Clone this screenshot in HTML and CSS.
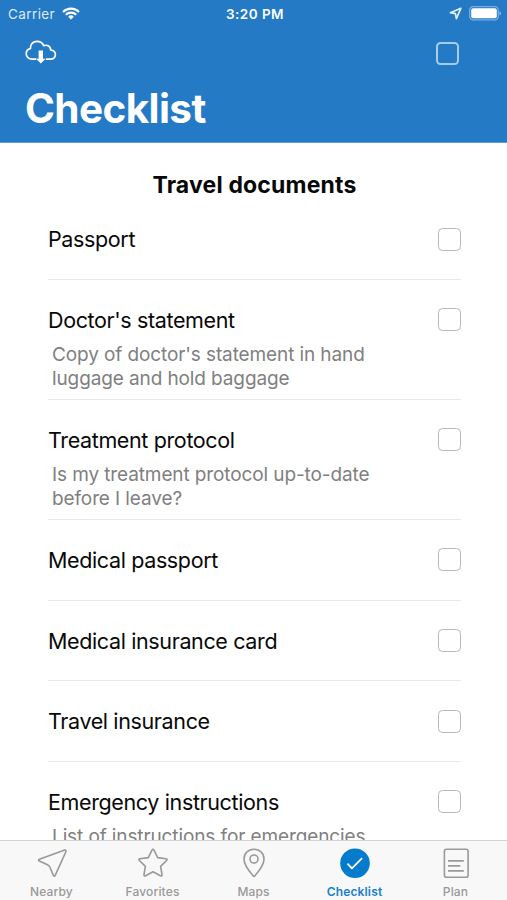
FILE: index.html
```html
<!DOCTYPE html>
<html lang="en">
<head>
<meta charset="utf-8">
<title>Checklist</title>
<link rel="stylesheet" href="styles.css">
</head>
<body>
<div class="app">
  <header class="header">
    <div class="status">
      <div class="status-left">
        <span class="carrier">Carrier</span>
        <svg class="wifi" width="18" height="13" viewBox="0 0 18 13" fill="none" stroke="#fff" stroke-width="2.1"><path d="M1 4.9a11.4 11.4 0 0 1 16 0M3.8 7.8a7.4 7.4 0 0 1 10.4 0"/><path d="M9 12.4 6.1 9.7a4.2 4.2 0 0 1 5.8 0z" fill="#fff" stroke="none"/></svg>
      </div>
      <span class="time">3:20 PM</span>
      <div class="status-right">
        <svg width="13" height="13" viewBox="0 0 13 13" fill="none" stroke="#e4f0fc" stroke-width="1.7" stroke-linejoin="round"><path d="M11.8 1.3 1.4 5.7 6.4 6.7 7.4 11.6z"/></svg>
        <svg width="33" height="15" viewBox="0 0 33 15"><rect x=".7" y=".7" width="28.6" height="13.1" rx="3.6" fill="none" stroke="#78addf" stroke-width="1.3"/><rect x="2.2" y="2.3" width="25.6" height="9.9" rx="2" fill="#fff"/><path d="M30.5 5.2q1.5.7 1.5 2.1t-1.5 2.1z" fill="#8dbbe7"/></svg>
      </div>
    </div>
    <div class="toolbar">
      <svg class="cloud" width="32" height="24" viewBox="0 0 32 24" fill="none" stroke="#fff" stroke-width="1.7" stroke-linecap="round" stroke-linejoin="round"><path d="M10.6 19.100H7.300C3.800 19.100 1.200 16.900 1.200 13.800c0-2.700 1.800-4.700 4.200-5.200C5.100 4.300 8 1.300 12 1.300c3.200 0 5.700 1.700 6.800 4.300 3.700-1.200 6.800 1 6.900 4.400 2.900.3 4.700 2.100 4.700 4.600 0 2.600-2 4.500-4.900 4.500h-3.900"/><path d="M13.600 10.500h4.400v8.200h2.600l-4.800 4.700-4.800-4.700h2.600z" fill="#fff" stroke="none"/></svg>
      <span class="box box-light"></span>
    </div>
    <h1 class="title">Checklist</h1>
  </header>

  <main class="content">
    <h2 class="section">Travel documents</h2>
    <ul class="list">
      <li class="row"><div class="line"><span>Passport</span><span class="box"></span></div></li>
      <li class="row tall"><div class="line"><span>Doctor's statement</span><span class="box"></span></div>
        <p class="note">Copy of doctor's statement in hand<br>luggage and hold baggage</p></li>
      <li class="row tall"><div class="line"><span>Treatment protocol</span><span class="box"></span></div>
        <p class="note">Is my treatment protocol up-to-date<br>before I leave?</p></li>
      <li class="row"><div class="line"><span>Medical passport</span><span class="box"></span></div></li>
      <li class="row"><div class="line"><span>Medical insurance card</span><span class="box"></span></div></li>
      <li class="row"><div class="line"><span>Travel insurance</span><span class="box"></span></div></li>
      <li class="row tall"><div class="line"><span>Emergency instructions</span><span class="box"></span></div>
        <p class="note">List of instructions for emergencies</p></li>
    </ul>
  </main>

  <nav class="tabs">
    <a class="tab"><svg width="32" height="32" viewBox="0 0 32 32"><path d="M28.700 3.100 3.400 12.200q-1.700.9 0 1.900L11.500 17.700q1.600.8 2.300 2.300l3.700 8.600q1 1.500 1.700-.2L30 4.500q.2-1.700-1.300-1.400z"/></svg><span>Nearby</span></a>
    <a class="tab"><svg width="32" height="32" viewBox="0 0 32 32"><path d="M15 3.100q1-1.700 2 0l3.700 7.500 8.300 1.100q2 .4.600 1.800l-6 5.800 1.400 8.200q.2 2-1.600 1.200L16 24.800l-7.400 3.900q-1.800.8-1.600-1.200l1.400-8.200-6-5.800q-1.400-1.400.6-1.800l8.300-1.100z"/></svg><span>Favorites</span></a>
    <a class="tab"><svg width="32" height="32" viewBox="0 0 32 32"><path d="M16 2.200c-5.800 0-10 4.200-10 9.900 0 6.700 6 13.200 9.200 16.800q.8.8 1.600 0C20 25.300 26 18.800 26 12.100 26 6.400 21.800 2.200 16 2.200z"/><circle cx="16" cy="12" r="4"/></svg><span>Maps</span></a>
    <a class="tab active"><svg width="32" height="32" viewBox="0 0 32 32"><circle class="disc" cx="16" cy="16.300" r="14.800"/><path class="tick" d="m8.500 16.700 4.400 4.700 10.200-10.200"/></svg><span>Checklist</span></a>
    <a class="tab"><svg width="32" height="32" viewBox="0 0 32 32"><rect x="4.400" y="2.300" width="23.700" height="28" rx="2"/><path d="M8 13.900h15.800M8 18.900h12.300M8 23.900h15.800"/></svg><span>Plan</span></a>
  </nav>
</div>
</body>
</html>
```

FILE: styles.css
```css
* { box-sizing: border-box; }

body {
  margin: 0;
  font-family: Inter, "Liberation Sans", sans-serif;
  color: #080808;
  background: #fff;
}

.app {
  display: flex;
  flex-direction: column;
  width: 507px;
  height: 900px;
  overflow: hidden;
}

.header {
  flex: none;
  height: 143px;
  background: #257ac6;
  border-bottom: 1px solid #5f9fd8;
  color: #fff;
}

.status {
  display: grid;
  grid-template-columns: 1fr auto 1fr;
  align-items: center;
  height: 27px;
  padding: 0 5px 0 8px;
  font-size: 13.5px;
}

.status-left,
.status-right { display: flex; align-items: center; gap: 7px; }

.status-right { justify-content: flex-end; }

.carrier { color: #dcebfa; letter-spacing: 0.4px; }

.time { font-weight: 600; letter-spacing: 0.45px; }

.toolbar {
  display: flex;
  justify-content: space-between;
  align-items: center;
  height: 53px;
  padding: 0 48px 0 25px;
}

.cloud { margin-bottom: 4px; }

.box {
  flex: none;
  width: 23px;
  height: 23px;
  border: 1.5px solid #b8b8b8;
  border-radius: 4.5px;
}

.box-light {
  border: 2px solid #a6cdf1;
}

.title {
  margin: 4px 0 0 25px;
  font-size: 40.5px;
  line-height: 50px;
  font-weight: 700;
  letter-spacing: -0.6px;
}

.content {
  flex: 1;
  min-height: 0;
  overflow: hidden;
  padding: 24px 46px 0 48px;
}

.section {
  margin: 0;
  height: 32px;
  font-size: 23px;
  line-height: 36px;
  font-weight: 700;
  text-align: center;
  letter-spacing: 0.17px;
}

.list { margin: 0; padding: 0; list-style: none; }

.row {
  height: 80.6px;
  border-bottom: 1px solid #e9e9e9;
}

.row.tall { height: 120.2px; }

.line {
  display: flex;
  justify-content: space-between;
  align-items: center;
  height: 80px;
  font-size: 21.5px;
  letter-spacing: -0.37px;
}

.note {
  margin: -16.4px 0 0 4px;
  color: #808080;
  font-size: 19px;
  line-height: 23.3px;
  letter-spacing: -0.11px;
}

.tabs {
  flex: none;
  display: grid;
  grid-template-columns: repeat(5, 101px);
  justify-content: center;
  height: 60px;
  border-top: 1px solid #d3d3d3;
  background: #f8f8f8;
}

.tab {
  display: flex;
  flex-direction: column;
  align-items: center;
  padding-top: 6px;
  color: #999;
  font-size: 12px;
  line-height: 14px;
  font-weight: 500;
  letter-spacing: 0.15px;
}

.tab span { margin-top: 6px; }

.tab svg {
  fill: none;
  stroke: #999;
  stroke-width: 1.6;
  stroke-linejoin: round;
}

.tab.active { color: #1681cb; font-weight: 600; }

.tab .disc { fill: #047bcc; stroke: none; }

.tab .tick { stroke: #fff; stroke-width: 1.8; }
```
